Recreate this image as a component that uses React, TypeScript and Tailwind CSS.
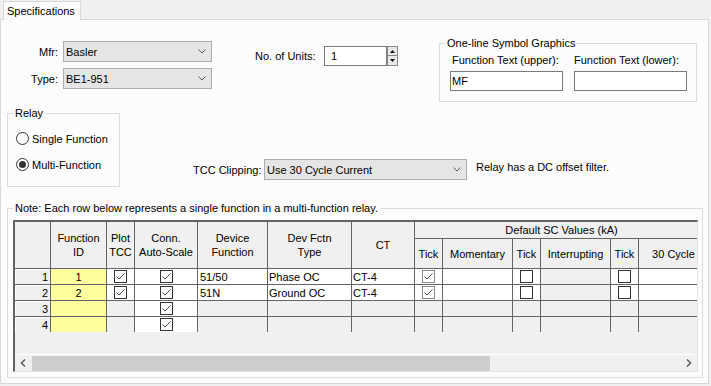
import { ReactNode } from "react";

type Row = {
  n: number;
  id: string;
  active: boolean;
  plot?: boolean;
  devFn?: string;
  devType?: string;
  ct?: string;
  ticks?: [boolean, boolean, boolean];
};

const rows: Row[] = [
  { n: 1, id: "1", active: true, plot: true, devFn: "51/50", devType: "Phase OC", ct: "CT-4", ticks: [true, false, false] },
  { n: 2, id: "2", active: true, plot: true, devFn: "51N", devType: "Ground OC", ct: "CT-4", ticks: [true, false, false] },
  { n: 3, id: "", active: false },
  { n: 4, id: "", active: false },
];

function Chevron() {
  return (
    <svg width="8" height="5" viewBox="0 0 8 5" className="shrink-0">
      <polyline points="0.5,0.5 4,4 7.5,0.5" fill="none" stroke="#5a5a5a" strokeWidth="1" />
    </svg>
  );
}

function Combo({ value, className }: { value: string; className: string }) {
  return (
    <div className={`flex h-[21px] items-center justify-between border border-[#adadad] bg-[#e5e5e5] pl-[2px] pr-[5px] ${className}`}>
      <span>{value}</span>
      <Chevron />
    </div>
  );
}

function Check({ checked, light }: { checked: boolean; light?: boolean }) {
  return (
    <div className={`flex h-[13px] w-[13px] items-center justify-center border bg-white ${light ? "border-[#8a8a8a]" : "border-[#333333]"}`}>
      {checked && (
        <svg width="11" height="11" viewBox="0 0 11 11">
          <polyline points="1.5,5.5 4,8 9.5,2.5" fill="none" stroke="#4a4a4a" strokeWidth="1" />
        </svg>
      )}
    </div>
  );
}

function Radio({ checked, label }: { checked: boolean; label: string }) {
  return (
    <div className="flex h-[13px] items-center">
      <div className="ml-[2px] flex h-[13px] w-[13px] items-center justify-center rounded-full border border-[#333333] bg-white">
        {checked && <div className="h-[7px] w-[7px] rounded-full bg-[#333333]" />}
      </div>
      <span className="ml-[3px]">{label}</span>
    </div>
  );
}

function Cell({ className, children }: { className: string; children?: ReactNode }) {
  return (
    <div className={`flex shrink-0 items-center border-r border-[#646464] ${className}`}>
      {children}
    </div>
  );
}

function HeadCell({ className, children }: { className: string; children?: ReactNode }) {
  return (
    <div className={`flex shrink-0 items-center justify-center border-r border-b border-[#646464] bg-[#f0f0f0] text-center ${className}`}>
      {children}
    </div>
  );
}

function Arrow({ dir }: { dir: "left" | "right" }) {
  return (
    <svg width="7" height="8" viewBox="0 0 7 8">
      <polyline
        points={dir === "left" ? "5,0.5 1.5,4 5,7.5" : "2,0.5 5.5,4 2,7.5"}
        fill="none"
        stroke="#606060"
        strokeWidth="1.6"
      />
    </svg>
  );
}

function Grid() {
  return (
    <div className="mt-[5px] flex h-[152px] w-[685px] flex-col overflow-hidden border-t-2 border-l-2 border-r border-b border-t-[#646464] border-l-[#646464] border-r-[#e3e3e3] border-b-[#e3e3e3] bg-[#f0f0f0]">
      {/* header */}
      <div className="flex h-[47px] shrink-0">
        <HeadCell className="h-[47px] w-[36px]" />
        <HeadCell className="h-[47px] w-[56px]">Function<br />ID</HeadCell>
        <HeadCell className="h-[47px] w-[28px]">Plot<br />TCC</HeadCell>
        <HeadCell className="h-[47px] w-[63px]">Conn.<br />Auto-Scale</HeadCell>
        <HeadCell className="h-[47px] w-[70px]">Device<br />Function</HeadCell>
        <HeadCell className="h-[47px] w-[84px]">Dev Fctn<br />Type</HeadCell>
        <HeadCell className="h-[47px] w-[63px]">CT</HeadCell>
        <div className="flex w-[294px] shrink-0 flex-col">
          <HeadCell className="h-[17px] w-[294px]">Default SC Values (kA)</HeadCell>
          <div className="flex">
            <HeadCell className="h-[30px] w-[28px]">Tick</HeadCell>
            <HeadCell className="h-[30px] w-[70px]">Momentary</HeadCell>
            <HeadCell className="h-[30px] w-[28px]">Tick</HeadCell>
            <HeadCell className="h-[30px] w-[70px]">Interrupting</HeadCell>
            <HeadCell className="h-[30px] w-[28px]">Tick</HeadCell>
            <HeadCell className="h-[30px] w-[70px]">30 Cycle</HeadCell>
          </div>
        </div>
      </div>

      {/* rows */}
      {rows.map((r) => {
        const h = r.n === 4 ? "h-[15px]" : "h-[16px] border-b";
        const live = r.active ? "bg-white" : "bg-[#f0f0f0]";
        return (
          <div key={r.n} className="flex shrink-0">
            <Cell className={`${h} w-[36px] justify-end bg-[#f0f0f0] pr-[2px] shadow-[inset_1px_1px_0_#ffffff]`}>{r.n}</Cell>
            <Cell className={`${h} w-[56px] justify-center bg-[#ffffa0]`}>{r.id}</Cell>
            <Cell className={`${h} w-[28px] justify-center ${live}`}>{r.active && <Check checked={!!r.plot} />}</Cell>
            <Cell className={`${h} w-[63px] justify-center bg-white`}><Check checked /></Cell>
            <Cell className={`${h} w-[70px] pl-[2px] ${live}`}>{r.devFn}</Cell>
            <Cell className={`${h} w-[84px] pl-[1px] ${live}`}>{r.devType}</Cell>
            <Cell className={`${h} w-[63px] pl-[1px] ${live}`}>{r.ct}</Cell>
            <Cell className={`${h} w-[28px] justify-center ${live}`}>{r.ticks && <Check checked={r.ticks[0]} light={r.ticks[0]} />}</Cell>
            <Cell className={`${h} w-[70px] ${live}`} />
            <Cell className={`${h} w-[28px] justify-center ${live}`}>{r.ticks && <Check checked={r.ticks[1]} />}</Cell>
            <Cell className={`${h} w-[70px] bg-[#f0f0f0]`} />
            <Cell className={`${h} w-[28px] justify-center ${live}`}>{r.ticks && <Check checked={r.ticks[2]} />}</Cell>
            <Cell className={`${h} w-[70px] ${live}`} />
          </div>
        );
      })}

      <div className="h-[23px] shrink-0 border-b border-white" />

      {/* horizontal scrollbar */}
      <div className="flex h-[16px] w-[682px] shrink-0 items-end bg-[#f0f0f0]">
        <div className="flex h-[16px] w-[17px] shrink-0 items-center justify-center">
          <Arrow dir="left" />
        </div>
        <div className="h-[15px] w-[458px] shrink-0 bg-[#cdcdcd]" />
        <div className="h-[16px] grow" />
        <div className="flex h-[16px] w-[17px] shrink-0 items-center justify-center">
          <Arrow dir="right" />
        </div>
      </div>
    </div>
  );
}

export default function App() {
  return (
    <div className="h-[386px] w-[711px] overflow-hidden bg-[#f0f0f0] font-['Liberation_Sans',Arial,sans-serif] text-[11px] leading-[14px] text-black">
      {/* tab strip */}
      <div className="flex h-[19px]">
        <div className="relative z-10 mt-[1px] ml-[3px] flex h-[19px] w-[78px] items-center border-t border-l border-r border-[#d9d9d9] bg-[#fcfcfc] pl-[3px]">
          Specifications
        </div>
      </div>

      {/* tab page */}
      <div className="h-[365px] w-[709px] border border-[#d9d9d9] bg-[#fcfcfc]">
        {/* top row */}
        <div className="flex h-[82px] items-start">
          <div className="mt-[21px] flex flex-col gap-[6px]">
            <div className="flex items-center">
              <span className="w-[57px] text-right">Mfr:</span>
              <Combo value="Basler" className="ml-[5px] w-[149px]" />
            </div>
            <div className="flex items-center">
              <span className="w-[57px] text-right">Type:</span>
              <Combo value="BE1-951" className="ml-[5px] w-[149px]" />
            </div>
          </div>

          <div className="mt-[26px] ml-[43px] flex items-center">
            <span className="w-[69px] whitespace-nowrap">No. of Units:</span>
            <div className="flex h-[20px] w-[63px] items-center border border-[#7a7a7a] bg-white pl-[6px]">1</div>
            <div className="flex h-[20px] w-[11px] flex-col">
              <div className="flex h-[10px] items-center justify-center border border-[#8a8a8a] bg-[#e8e8e8]">
                <svg width="5" height="3" viewBox="0 0 5 3"><polygon points="0,3 2.5,0 5,3" fill="#111" /></svg>
              </div>
              <div className="flex h-[10px] items-center justify-center border border-t-0 border-[#8a8a8a] bg-[#e8e8e8]">
                <svg width="5" height="3" viewBox="0 0 5 3"><polygon points="0,0 2.5,3 5,0" fill="#111" /></svg>
              </div>
            </div>
          </div>

          <fieldset className="mt-[16px] ml-[41px] h-[66px] w-[258px] border border-[#dcdcdc] pl-[6px]">
            <legend className="px-[1px] leading-[14px]">One-line Symbol Graphics</legend>
            <div className="ml-[4px] flex gap-[11px]">
              <div className="flex flex-col">
                <span className="mt-[3px] pl-[2px]">Function Text (upper):</span>
                <div className="mt-[4px] flex h-[20px] w-[113px] items-center border border-[#7a7a7a] bg-white pl-[1px]">MF</div>
              </div>
              <div className="flex flex-col">
                <span className="mt-[3px]">Function Text (lower):</span>
                <div className="mt-[4px] h-[20px] w-[113px] border border-[#7a7a7a] bg-white" />
              </div>
            </div>
          </fieldset>
        </div>

        {/* relay / clipping row */}
        <div className="flex items-start">
          <fieldset className="mt-[4px] ml-[6px] h-[81px] w-[113px] border border-[#dcdcdc] pl-[6px]">
            <legend className="px-[1px] leading-[14px]">Relay</legend>
            <div className="mt-[12px] flex flex-col gap-[13px]">
              <Radio checked={false} label="Single Function" />
              <Radio checked label="Multi-Function" />
            </div>
          </fieldset>

          <div className="mt-[57px] ml-[73px] flex items-center">
            <span className="w-[71px] whitespace-nowrap">TCC Clipping:</span>
            <Combo value="Use 30 Cycle Current" className="w-[203px]" />
            <span className="mb-[5px] ml-[9px] whitespace-nowrap">Relay has a DC offset filter.</span>
          </div>
        </div>

        {/* functions grid */}
        <fieldset className="mt-[14px] ml-[6px] h-[177px] w-[696px] border border-[#dcdcdc] pl-[5px]">
          <legend className="px-[2px] leading-[14px]">
            Note: Each row below represents a single function in a multi-function relay.
          </legend>
          <Grid />
        </fieldset>
      </div>
    </div>
  );
}
